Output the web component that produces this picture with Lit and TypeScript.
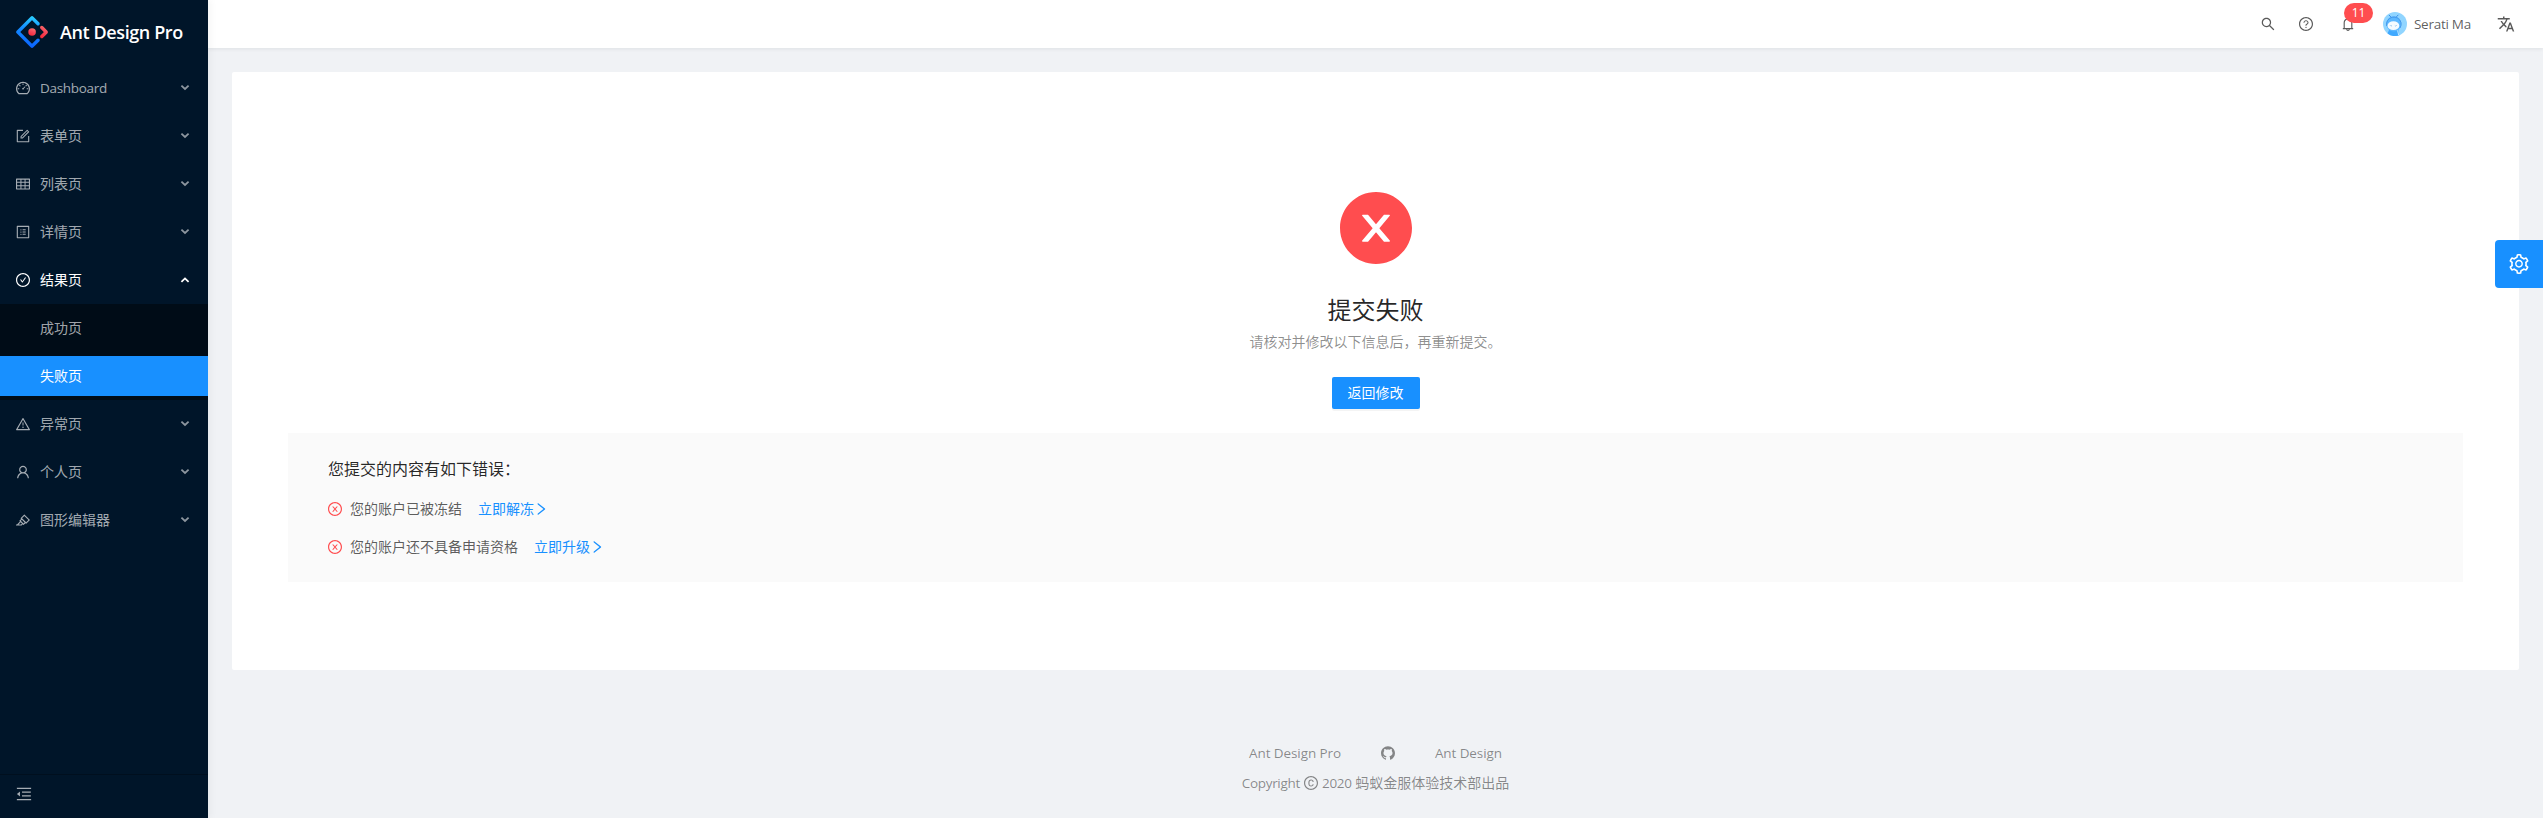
import { LitElement, html, css, svg } from "lit";
import { customElement } from "lit/decorators.js";

const RING =
  "M512 64C264.6 64 64 264.6 64 512s200.6 448 448 448 448-200.6 448-448S759.4 64 512 64zm0 820c-205.4 0-372-166.6-372-372s166.6-372 372-372 372 166.6 372 372-166.6 372-372 372z";

const ICONS: Record<string, string> = {
  search:
    "M909.6 854.5L649.9 594.8C690.2 542.7 712 479 712 412c0-80.2-31.3-155.4-87.9-212.1-56.6-56.7-132-87.9-212.1-87.9s-155.5 31.3-212.1 87.9C143.2 256.5 112 331.8 112 412c0 80.1 31.3 155.5 87.9 212.1C256.5 680.8 331.8 712 412 712c67 0 130.6-21.8 182.7-62l259.7 259.6a8.2 8.2 0 0 0 11.6 0l43.6-43.5a8.2 8.2 0 0 0 0-11.6zM570.4 570.4C528 612.7 471.8 636 412 636s-116-23.3-158.4-65.6C211.3 528 188 471.8 188 412s23.3-116.1 65.6-158.4C296 211.3 352.2 188 412 188s116.1 23.2 158.4 65.6S636 352.2 636 412s-23.3 116.1-65.6 158.4z",
  question:
    RING +
    "M623.6 316.7C593.6 290.4 554 276 512 276s-81.6 14.5-111.6 40.7C369.2 344 352 380.7 352 420v7.6c0 4.4 3.6 8 8 8h48c4.4 0 8-3.6 8-8V420c0-44.1 43.1-80 96-80s96 35.9 96 80c0 31.1-22 59.6-56.1 72.7-21.2 8.1-39.2 22.3-52.1 40.9-13.1 19-19.9 41.8-19.9 64.9V620c0 4.4 3.6 8 8 8h48c4.4 0 8-3.6 8-8v-22.7a48.3 48.3 0 0 1 30.9-44.8c59-22.7 97.1-74.7 97.1-132.5.1-39.3-17.1-76-48.3-103.3zM472 732a40 40 0 1 0 80 0 40 40 0 1 0-80 0z",
  bell: "M816 768h-24V428c0-141.1-104.3-257.7-240-277.1V112c0-22.1-17.9-40-40-40s-40 17.9-40 40v38.9c-135.7 19.4-240 136-240 277.1v340h-24c-17.7 0-32 14.3-32 32v32c0 4.4 3.6 8 8 8h216c0 61.8 50.2 112 112 112s112-50.2 112-112h216c4.4 0 8-3.6 8-8v-32c0-17.7-14.3-32-32-32zM512 888c-26.5 0-48-21.5-48-48h96c0 26.5-21.5 48-48 48zM304 768V428c0-55.6 21.6-107.8 60.9-147.1S456.4 220 512 220c55.6 0 107.8 21.6 147.1 60.9S720 372.4 720 428v340H304z",
  dashboard:
    "M924.8 385.6a446.7 446.7 0 0 0-96-142.4 446.7 446.7 0 0 0-142.4-96C631.1 123.8 572.5 112 512 112s-119.1 11.8-174.4 35.2a446.7 446.7 0 0 0-142.4 96 446.7 446.7 0 0 0-96 142.4C75.8 440.9 64 499.5 64 560c0 132.7 58.3 257.7 159.9 343.1l1.7 1.4c5.8 4.8 13.1 7.5 20.6 7.5h531.7c7.5 0 14.8-2.7 20.6-7.5l1.7-1.4C901.7 817.7 960 692.7 960 560c0-60.5-11.9-119.1-35.2-174.4zM761.4 836H262.6A371.12 371.12 0 0 1 140 560c0-99.4 38.7-192.8 109-263 70.3-70.3 163.7-109 263-109 99.4 0 192.8 38.7 263 109 70.3 70.3 109 163.7 109 263 0 105.6-44.5 205.5-122.6 276zM623.5 421.5a8.03 8.03 0 0 0-11.3 0L527.7 506c-18.7-5-39.4-.2-54.1 14.5a55.95 55.95 0 0 0 0 79.2 55.95 55.95 0 0 0 79.2 0 55.87 55.87 0 0 0 14.5-54.1l84.5-84.5c3.1-3.1 3.1-8.2 0-11.3l-28.3-28.3zM490 320h44c4.4 0 8-3.6 8-8v-80c0-4.4-3.6-8-8-8h-44c-4.4 0-8 3.6-8 8v80c0 4.4 3.6 8 8 8zm260 218v44c0 4.4 3.6 8 8 8h80c4.4 0 8-3.6 8-8v-44c0-4.4-3.6-8-8-8h-80c-4.4 0-8 3.6-8 8zm12.7-197.2l-31.1-31.1a8.03 8.03 0 0 0-11.3 0l-56.6 56.6a8.03 8.03 0 0 0 0 11.3l31.1 31.1c3.1 3.1 8.2 3.1 11.3 0l56.6-56.6c3.1-3.1 3.1-8.2 0-11.3zm-458.6-31.1a8.03 8.03 0 0 0-11.3 0l-31.1 31.1a8.03 8.03 0 0 0 0 11.3l56.6 56.6c3.1 3.1 8.2 3.1 11.3 0l31.1-31.1c3.1-3.1 3.1-8.2 0-11.3l-56.6-56.6zM262 530h-80c-4.4 0-8 3.6-8 8v44c0 4.4 3.6 8 8 8h80c4.4 0 8-3.6 8-8v-44c0-4.4-3.6-8-8-8z",
  form: "M904 512h-56c-4.4 0-8 3.6-8 8v320H184V184h320c4.4 0 8-3.6 8-8v-56c0-4.4-3.6-8-8-8H144c-17.7 0-32 14.3-32 32v736c0 17.7 14.3 32 32 32h736c17.7 0 32-14.3 32-32V520c0-4.4-3.6-8-8-8zM355.9 534.9L354 653.8c-.1 8.9 7.1 16.2 16 16.2h.4l118-2.9c2-.1 4-.9 5.4-2.3l415.9-415c3.1-3.1 3.1-8.2 0-11.3L785.4 114.3c-1.6-1.6-3.6-2.3-5.7-2.3s-4.1.8-5.7 2.3l-415.8 415a8.3 8.3 0 0 0-2.3 5.6zm63.5 23.6L779.7 199l45.2 45.1-360.5 359.7-45.7 1.1.7-46.4z",
  table:
    "M928 160H96c-17.7 0-32 14.3-32 32v640c0 17.7 14.3 32 32 32h832c17.7 0 32-14.3 32-32V192c0-17.7-14.3-32-32-32zm-40 208H676V232h212v136zm0 224H676V432h212v160zM412 432h200v160H412V432zm200-64H412V232h200v136zm-476 64h212v160H136V432zm0-200h212v136H136V232zm0 424h212v136H136V656zm276 0h200v136H412V656zm476 136H676V656h212v136z",
  profile:
    "M880 112H144c-17.7 0-32 14.3-32 32v736c0 17.7 14.3 32 32 32h736c17.7 0 32-14.3 32-32V144c0-17.7-14.3-32-32-32zm-40 728H184V184h656v656zM492 400h184c4.4 0 8-3.6 8-8v-48c0-4.4-3.6-8-8-8H492c-4.4 0-8 3.6-8 8v48c0 4.4 3.6 8 8 8zm0 144h184c4.4 0 8-3.6 8-8v-48c0-4.4-3.6-8-8-8H492c-4.4 0-8 3.6-8 8v48c0 4.4 3.6 8 8 8zm0 144h184c4.4 0 8-3.6 8-8v-48c0-4.4-3.6-8-8-8H492c-4.4 0-8 3.6-8 8v48c0 4.4 3.6 8 8 8zM340 368a40 40 0 1 0 80 0 40 40 0 1 0-80 0zm0 144a40 40 0 1 0 80 0 40 40 0 1 0-80 0zm0 144a40 40 0 1 0 80 0 40 40 0 1 0-80 0z",
  check:
    RING +
    "M699 353h-46.9c-10.2 0-19.9 4.9-25.9 13.3L469 584.3l-71.2-98.8c-6-8.3-15.6-13.3-25.9-13.3H325c-6.5 0-10.3 7.4-6.5 12.7l124.6 172.8a31.8 31.8 0 0 0 51.7 0l210.6-292c3.9-5.3.1-12.7-6.4-12.7z",
  warning:
    "M464 720a48 48 0 1 0 96 0 48 48 0 1 0-96 0zm16-304v184c0 4.4 3.6 8 8 8h48c4.4 0 8-3.6 8-8V416c0-4.4-3.6-8-8-8h-48c-4.4 0-8 3.6-8 8zm475.7 440l-416-720c-6.2-10.7-16.9-16-27.7-16s-21.6 5.3-27.7 16l-416 720C56 877.4 71.4 904 96 904h832c24.6 0 40-26.6 27.7-48zm-783.5-27.9L512 239.9l339.8 588.2H172.2z",
  user: "M858.5 763.6a374 374 0 0 0-80.6-119.5 375.63 375.63 0 0 0-119.5-80.6c-.4-.2-.8-.3-1.2-.5C719.5 518 760 444.7 760 362c0-137-111-248-248-248S264 225 264 362c0 82.7 40.5 156 102.8 201.1-.4.2-.8.3-1.2.5-44.8 18.9-85 46-119.5 80.6a375.63 375.63 0 0 0-80.6 119.5A371.7 371.7 0 0 0 136 901.8a8 8 0 0 0 8 8.2h60c4.4 0 7.9-3.5 8-7.8 2-77.2 33-149.5 87.8-204.3 56.7-56.7 132-87.9 212.2-87.9s155.5 31.2 212.2 87.9C779 752.7 810 825 812 902.2c.1 4.4 3.6 7.8 8 7.8h60a8 8 0 0 0 8-8.2c-1-47.8-10.9-94.3-29.5-138.2zM512 534c-45.9 0-89.1-17.9-121.6-50.4S340 407.9 340 362c0-45.9 17.9-89.1 50.4-121.6S466.1 190 512 190s89.1 17.9 121.6 50.4S684 316.1 684 362c0 45.9-17.9 89.1-50.4 121.6S557.9 534 512 534z",
  highlight:
    "M957.6 507.4L603.2 158.2a7.9 7.9 0 0 0-11.2 0L353.3 393.4a8.03 8.03 0 0 0-.1 11.3l.1.1 40 39.4-117.2 115.3a8.03 8.03 0 0 0-.1 11.3l.1.1 39.5 38.9-189.1 187H72.1c-4.4 0-8.1 3.6-8.1 8V860c0 4.4 3.6 8 8 8h344.9c2.1 0 4.1-.8 5.6-2.3l76.1-75.6 40.4 39.8a7.9 7.9 0 0 0 11.2 0l117.1-115.6 40.1 39.5a7.9 7.9 0 0 0 11.2 0l238.7-235.2c3.4-3 3.4-8 .3-11.2zM389.8 796.2H229.6l134.4-133 80.1 78.9-54.3 54.1zm154.8-62.1L373.2 565.2l68.6-67.6 171.4 168.9-68.6 67.6zM713.1 658L450.3 399.1 597.6 254l262.8 259-147.3 145z",
  fold: "M408 442h480c4.4 0 8-3.6 8-8v-56c0-4.4-3.6-8-8-8H408c-4.4 0-8 3.6-8 8v56c0 4.4 3.6 8 8 8zm-8 204c0 4.4 3.6 8 8 8h480c4.4 0 8-3.6 8-8v-56c0-4.4-3.6-8-8-8H408c-4.4 0-8 3.6-8 8v56zm504-486H120c-4.4 0-8 3.6-8 8v56c0 4.4 3.6 8 8 8h784c4.4 0 8-3.6 8-8v-56c0-4.4-3.6-8-8-8zm0 632H120c-4.4 0-8 3.6-8 8v56c0 4.4 3.6 8 8 8h784c4.4 0 8-3.6 8-8v-56c0-4.4-3.6-8-8-8zM115.4 518.9L271.7 642c5.8 4.6 14.4.5 14.4-6.9V388.9c0-7.4-8.5-11.5-14.4-6.9L115.4 505.1a8.74 8.74 0 0 0 0 13.8z",
  closeFilled:
    "M512 64C264.6 64 64 264.6 64 512s200.6 448 448 448 448-200.6 448-448S759.4 64 512 64zm165.4 618.2l-66-.3L512 563.4l-99.3 118.4-66.1.3c-4.4 0-8-3.5-8-8 0-1.9.7-3.7 1.9-5.2l130.1-155L340.5 359a8.32 8.32 0 0 1-1.9-5.2c0-4.4 3.6-8 8-8l66.1.3L512 464.6l99.3-118.4 66-.3c4.4 0 8 3.5 8 8 0 1.9-.7 3.7-1.9 5.2L553.5 514l130 155c1.2 1.5 1.9 3.3 1.9 5.2 0 4.4-3.6 8-8 8z",
  close:
    RING +
    "M685.4 354.8c0-4.4-3.6-8-8-8l-66 .3L512 465.6l-99.3-118.4-66.1-.3c-4.4 0-8 3.5-8 8 0 1.9.7 3.7 1.9 5.2l130.1 155L340.5 670a8.32 8.32 0 0 0-1.9 5.2c0 4.4 3.6 8 8 8l66.1-.3L512 564.4l99.3 118.4 66 .3c4.4 0 8-3.5 8-8 0-1.9-.7-3.7-1.9-5.2L553.5 515l130.1-155c1.2-1.4 1.8-3.3 1.8-5.2z",
  right:
    "M765.7 486.8L314.9 134.7A7.97 7.97 0 0 0 302 141v77.3c0 4.9 2.3 9.6 6.1 12.6l360 281.1-360 281.1c-3.9 3-6.1 7.7-6.1 12.6V883c0 6.7 7.7 10.4 12.9 6.3l450.8-352.1a31.96 31.96 0 0 0 0-50.4z",
  github:
    "M511.6 76.3C264.3 76.2 64 276.4 64 523.5 64 718.9 189.3 885 363.8 946c23.5 5.9 19.9-10.8 19.9-22.2v-77.5c-135.7 15.9-141.2-73.9-150.3-88.9C215 726 171.5 718 184.5 703c30.9-15.9 62.4 4 98.9 57.9 26.4 39.1 77.9 32.5 104 26 5.7-23.5 17.9-44.5 34.7-60.8-140.6-25.2-199.2-111-199.2-213 0-49.5 16.3-95 48.3-131.7-20.4-60.5 1.9-112.3 4.9-120 58.1-5.2 118.5 41.6 123.2 45.3 33-8.9 70.7-13.6 112.9-13.6 42.4 0 80.2 4.9 113.5 13.9 11.3-8.6 67.3-48.8 121.3-43.9 2.9 7.7 24.7 58.3 5.5 118 32.4 36.8 48.9 82.7 48.9 132.3 0 102.2-59 188.1-200 212.9a127.5 127.5 0 0 1 38.1 91v112.5c.8 9 0 17.9 15 17.9 177.1-59.7 304.6-227 304.6-424.1 0-247.2-200.4-447.3-447.5-447.3z",
  copyright:
    RING +
    "M517.6 351.3c53 0 89 33.8 93 83.4.3 4.2 3.8 7.4 8 7.4h56.7c2.6 0 4.7-2.1 4.7-4.7 0-86.7-68.4-147.4-162.7-147.4C407.4 290 344 364.2 344 486.8v52.3C344 660.8 407.4 734 517.3 734c94 0 162.7-58.8 162.7-141.4 0-2.6-2.1-4.7-4.7-4.7h-56.8c-4.2 0-7.6 3.2-8 7.3-4.2 46.1-40.1 77.8-93 77.8-65.3 0-102.1-47.9-102.1-133.6v-52.6c.1-87 37-135.5 102.2-135.5z",
  setting:
    "M924.8 625.7l-65.5-56c3.1-19 4.7-38.4 4.7-57.8s-1.6-38.8-4.7-57.8l65.5-56a32.03 32.03 0 0 0 9.3-35.2l-.9-2.6a443.74 443.74 0 0 0-79.7-137.9l-1.8-2.1a32.12 32.12 0 0 0-35.1-9.5l-81.3 28.9c-30-24.6-63.5-44-99.7-57.6l-15.7-85a32.05 32.05 0 0 0-25.8-25.7l-2.7-.5c-52.1-9.4-106.9-9.4-159 0l-2.7.5a32.05 32.05 0 0 0-25.8 25.7l-15.8 85.4a351.86 351.86 0 0 0-99 57.4l-81.9-29.1a32 32 0 0 0-35.1 9.5l-1.8 2.1a446.02 446.02 0 0 0-79.7 137.9l-.9 2.6c-4.5 12.5-.8 26.5 9.3 35.2l66.3 56.6c-3.1 18.8-4.6 38-4.6 57.1 0 19.2 1.5 38.4 4.6 57.1L99 625.5a32.03 32.03 0 0 0-9.3 35.2l.9 2.6c18.1 50.4 44.9 96.9 79.7 137.9l1.8 2.1a32.12 32.12 0 0 0 35.1 9.5l81.9-29.1c29.8 24.5 63.1 43.9 99 57.4l15.8 85.4a32.05 32.05 0 0 0 25.8 25.7l2.7.5a449.4 449.4 0 0 0 159 0l2.7-.5a32.05 32.05 0 0 0 25.8-25.7l15.7-85a350 350 0 0 0 99.7-57.6l81.3 28.9a32 32 0 0 0 35.1-9.5l1.8-2.1c34.8-41.1 61.6-87.5 79.7-137.9l.9-2.6c4.5-12.3.8-26.3-9.3-35zM788.3 465.9c2.5 15.1 3.8 30.6 3.8 46.1s-1.3 31-3.8 46.1l-6.6 40.1 74.7 63.9a370.03 370.03 0 0 1-42.6 73.6L721 702.8l-31.4 25.8c-23.9 19.6-50.5 35-79.3 45.8l-38.1 14.3-17.9 97a377.5 377.5 0 0 1-85 0l-17.9-97.2-37.8-14.5c-28.5-10.8-55-26.2-78.7-45.7l-31.4-25.9-93.4 33.2c-17-22.9-31.2-47.6-42.6-73.6l75.5-64.5-6.5-40c-2.4-14.9-3.7-30.3-3.7-45.5 0-15.3 1.2-30.6 3.7-45.5l6.5-40-75.5-64.5c11.3-26.1 25.6-50.7 42.6-73.6l93.4 33.2 31.4-25.9c23.7-19.5 50.2-34.9 78.7-45.7l37.9-14.3 17.9-97.2c28.1-3.2 56.8-3.2 85 0l17.9 97 38.1 14.3c28.7 10.8 55.4 26.2 79.3 45.8l31.4 25.8 92.8-32.9c17 22.9 31.2 47.6 42.6 73.6L781.8 426l6.5 39.9zM512 326c-97.2 0-176 78.8-176 176s78.8 176 176 176 176-78.8 176-176-78.8-176-176-176zm79.2 255.2A111.6 111.6 0 0 1 512 614c-29.9 0-58-11.7-79.2-32.8A111.6 111.6 0 0 1 400 502c0-29.9 11.7-58 32.8-79.2C454 401.6 482.1 390 512 390c29.9 0 58 11.6 79.2 32.8A111.6 111.6 0 0 1 624 502c0 29.9-11.7 58-32.8 79.2z",
};

const icon = (name: string, size = 14) => html`<svg
  class="icon"
  width=${size}
  height=${size}
  viewBox="64 64 896 896"
  fill="currentColor"
>
  ${svg`<path d=${ICONS[name]} />`}
</svg>`;

const arrow = (up = false) => html`<svg class="arrow" width="10" height="8" viewBox="0 0 10 8">
  <path
    d=${up ? "M1.4 5.8L5 2.4L8.6 5.8" : "M1.4 1.6L5 5L8.6 1.6"}
    fill="none"
    stroke="currentColor"
    stroke-width="1.8"
  />
</svg>`;

interface MenuEntry {
  icon: string;
  label: string;
  latin?: boolean;
  children?: { label: string; selected?: boolean }[];
}

const MENU: MenuEntry[] = [
  { icon: "dashboard", label: "Dashboard", latin: true },
  { icon: "form", label: "表单页" },
  { icon: "table", label: "列表页" },
  { icon: "profile", label: "详情页" },
  {
    icon: "check",
    label: "结果页",
    children: [{ label: "成功页" }, { label: "失败页", selected: true }],
  },
  { icon: "warning", label: "异常页" },
  { icon: "user", label: "个人页" },
  { icon: "highlight", label: "图形编辑器" },
];

const ERRORS = [
  { text: "您的账户已被冻结", action: "立即解冻" },
  { text: "您的账户还不具备申请资格", action: "立即升级" },
];

@customElement("app-root")
export class AppRoot extends LitElement {
  static styles = css`
    :host {
      display: flex;
      position: relative;
      height: 818px;
      overflow: hidden;
      background: #f0f2f5;
      font-family: "Open Sans", "Noto Sans CJK SC", sans-serif;
      font-size: 14px;
      line-height: 22px;
      color: rgba(0, 0, 0, 0.65);
    }
    * {
      box-sizing: border-box;
    }
    .icon,
    .arrow {
      display: block;
      flex: none;
    }
    .sider {
      display: flex;
      flex-direction: column;
      flex: none;
      width: 208px;
      background: #001529;
      box-shadow: 2px 0 8px 0 rgba(29, 35, 41, 0.05);
      z-index: 1;
      color: rgba(255, 255, 255, 0.65);
    }
    .brand {
      display: flex;
      align-items: center;
      gap: 12px;
      height: 64px;
      padding-left: 16px;
      color: #fff;
      font-size: 18px;
      font-weight: 600;
      white-space: nowrap;
      letter-spacing: -0.4px;
    }
    .menu {
      flex: 1;
    }
    .row {
      display: flex;
      align-items: center;
      gap: 10px;
      height: 48px;
      padding: 0 18px 0 16px;
    }
    .row.open {
      color: #fff;
    }
    .label {
      flex: 1;
    }
    .latin {
      font-size: 13.5px;
      letter-spacing: -0.3px;
    }
    .arrow {
      opacity: 0.85;
    }
    .open .arrow {
      opacity: 1;
    }
    .sub {
      background: #000c17;
      padding: 4px 0;
      display: grid;
      gap: 8px;
    }
    .subitem {
      height: 40px;
      line-height: 40px;
      padding-left: 40px;
    }
    .subitem.selected {
      background: #1890ff;
      color: #fff;
    }
    .collapse {
      height: 44px;
      padding: 11px 16px 0;
      border-top: 1px solid #000f1e;
    }
    .page {
      display: flex;
      flex-direction: column;
      flex: 1;
      min-width: 0;
    }
    .header {
      display: flex;
      align-items: center;
      justify-content: flex-end;
      height: 48px;
      flex: none;
      padding-right: 28px;
      background: #fff;
      box-shadow: 0 1px 4px rgba(0, 21, 41, 0.08);
    }
    .search {
      margin-right: 24px;
    }
    .notice {
      position: relative;
      margin: 0 28px;
    }
    .badge {
      position: absolute;
      left: 3px;
      top: -14px;
      width: 29px;
      height: 20px;
      border-radius: 10px;
      background: #ff4d4f;
      color: #fff;
      font-size: 12px;
      line-height: 20px;
      text-align: center;
    }
    .avatar {
      display: block;
      margin-right: 7px;
    }
    .name {
      width: 58px;
      margin-right: 25px;
      white-space: nowrap;
      font-size: 13.5px;
      letter-spacing: -0.28px;
    }
    .lang {
      display: block;
    }
    .card {
      flex: none;
      height: 598px;
      margin: 24px 24px 0;
      padding: 120px 56px 0;
      background: #fff;
      border-radius: 2px;
      display: flex;
      flex-direction: column;
      align-items: center;
    }
    .failed {
      color: #ff4d4f;
    }
    .title {
      margin-top: 24px;
      font-size: 24px;
      line-height: 43px;
      color: rgba(0, 0, 0, 0.85);
    }
    .subtitle {
      color: rgba(0, 0, 0, 0.45);
    }
    .button {
      margin-top: 24px;
      height: 32px;
      padding: 0 16px;
      border: 0;
      border-radius: 2px;
      background: #1890ff;
      color: #fff;
      font: inherit;
      box-shadow: 0 2px 0 rgba(0, 0, 0, 0.045);
    }
    .errors {
      align-self: stretch;
      display: grid;
      gap: 16px;
      margin-top: 24px;
      padding: 24px 40px;
      background: #fafafa;
    }
    .errors-title {
      font-size: 16px;
      line-height: 25px;
      color: rgba(0, 0, 0, 0.85);
    }
    .error {
      display: flex;
      align-items: center;
    }
    .error .failed {
      margin-right: 8px;
    }
    .link {
      display: flex;
      align-items: center;
      margin-left: 16px;
      color: #1890ff;
    }
    .footer {
      display: flex;
      flex-direction: column;
      align-items: center;
      gap: 8px;
      margin-top: 72px;
      color: rgba(0, 0, 0, 0.45);
    }
    .links {
      display: flex;
      align-items: center;
      gap: 40px;
      font-size: 13.5px;
      letter-spacing: -0.1px;
    }
    .copy {
      display: flex;
      align-items: center;
      gap: 4px;
    }
    .settings {
      position: absolute;
      right: 0;
      top: 240px;
      display: flex;
      align-items: center;
      justify-content: center;
      width: 48px;
      height: 48px;
      border-radius: 4px 0 0 4px;
      background: #1890ff;
      color: #fff;
      z-index: 2;
    }
  `;

  private renderLogo() {
    return html`<svg width="32" height="32" viewBox="0 0 200 200">
      <defs>
        <linearGradient id="g2" x1="50%" y1="0%" x2="40%" y2="100%">
          <stop offset="0" stop-color="#29cdff" />
          <stop offset="0.38" stop-color="#148eff" />
          <stop offset="1" stop-color="#0a60ff" />
        </linearGradient>
        <linearGradient id="g3" x1="69.7%" y1="-13%" x2="16.7%" y2="117.4%">
          <stop offset="0" stop-color="#fa816e" />
          <stop offset="0.41" stop-color="#f74a5c" />
          <stop offset="1" stop-color="#f51d2c" />
        </linearGradient>
      </defs>
      <path
        fill="url(#g2)"
        d="M91.588 4.177L4.18 91.513c-4.7 4.695-4.7 12.279 0 16.974l87.408 87.336c4.7 4.696 12.289 4.696 16.989 0l36.648-36.618c4.209-4.205 4.209-11.023 0-15.228-4.208-4.205-11.031-4.205-15.24 0l-27.783 27.76c-1.17 1.169-2.945 1.169-4.114 0L28.286 101.993c-1.17-1.169-1.17-2.942 0-4.111l69.802-69.744c1.169-1.169 2.944-1.169 4.114 0l27.783 27.76c4.209 4.205 11.032 4.205 15.24 0 4.209-4.205 4.209-11.022 0-15.227L108.58 4.056c-4.718-4.594-12.311-4.557-16.992.12z"
      />
      <path
        fill="url(#g3)"
        d="M153.686 135.855c4.208 4.205 11.031 4.205 15.24 0l27.034-27.012c4.7-4.696 4.7-12.28 0-16.974l-27.27-27.151c-4.218-4.2-11.043-4.194-15.254.014-4.209 4.205-4.209 11.022 0 15.227l18.418 18.403c1.17 1.17 1.17 2.943 0 4.112l-18.168 18.153c-4.21 4.205-4.21 11.023 0 15.228z"
      />
      <ellipse fill="url(#g3)" cx="100.5" cy="100.4" rx="23.6" ry="23.6" />
    </svg>`;
  }

  private renderAvatar() {
    return html`<svg class="avatar" width="24" height="24" viewBox="0 0 24 24">
      <circle cx="12" cy="12" r="12" fill="#91d5ff" />
      <path d="M4.5 21.4l1.5-3.4h9.5l.8 5.2a12 12 0 0 1-11.8-1.8z" fill="#40a9ff" />
      <path d="M14.5 18l1.2 5.2" stroke="#e6f7ff" stroke-width="0.8" />
      <path d="M8.4 5.5L6 3M13 5.2L15.4 2.8" stroke="#3a8fe8" stroke-width="1" />
      <circle cx="10.8" cy="11.8" r="7.6" fill="#5db8ff" />
      <path
        d="M3.6 14a7.4 7.4 0 0 1 14.4-3.4a7.4 7.4 0 0 1-1 5.4"
        fill="none"
        stroke="#3d8fe6"
        stroke-width="0.8"
      />
      <ellipse cx="10.4" cy="13.7" rx="5.9" ry="4.4" fill="#f5fbff" />
      <path
        d="M7 13.2l1 1 1-.8M11.8 13.4l1 .8 1-1"
        fill="none"
        stroke="#7fb7e8"
        stroke-width="0.7"
      />
    </svg>`;
  }

  private renderMenuEntry(entry: MenuEntry) {
    const open = !!entry.children;
    return html`
      <div class="row ${open ? "open" : ""}">
        ${icon(entry.icon)}
        <span class="label ${entry.latin ? "latin" : ""}">${entry.label}</span>
        ${arrow(open)}
      </div>
      ${entry.children
        ? html`<div class="sub">
            ${entry.children.map(
              (c) => html`<div class="subitem ${c.selected ? "selected" : ""}">${c.label}</div>`
            )}
          </div>`
        : ""}
    `;
  }

  render() {
    return html`
      <aside class="sider">
        <div class="brand">${this.renderLogo()}<span>Ant Design Pro</span></div>
        <nav class="menu">${MENU.map((entry) => this.renderMenuEntry(entry))}</nav>
        <div class="collapse">${icon("fold", 16)}</div>
      </aside>
      <div class="page">
        <header class="header">
          <span class="search">${icon("search")}</span>
          ${icon("question")}
          <span class="notice">${icon("bell")}<span class="badge">11</span></span>
          ${this.renderAvatar()}
          <span class="name">Serati Ma</span>
          <svg class="lang" width="18" height="18" viewBox="0 0 24 24" fill="currentColor">
            <path
              d="M12.87 15.07l-2.54-2.51.03-.03c1.74-1.94 2.98-4.17 3.71-6.53H17V4h-7V2H8v2H1v1.99h11.17C11.5 7.92 10.44 9.75 9 11.35 8.07 10.32 7.3 9.19 6.69 8h-2c.73 1.63 1.73 3.17 2.98 4.56l-5.09 5.02L4 19l5-5 3.11 3.11.76-2.04zM18.5 10h-2L12 22h2l1.12-3h4.75L21 22h2l-4.5-12zm-2.62 7l1.62-4.33L19.12 17h-3.24z"
            />
          </svg>
        </header>
        <main class="card">
          <span class="failed">${icon("closeFilled", 72)}</span>
          <div class="title">提交失败</div>
          <div class="subtitle">请核对并修改以下信息后，再重新提交。</div>
          <button class="button">返回修改</button>
          <section class="errors">
            <div class="errors-title">您提交的内容有如下错误：</div>
            ${ERRORS.map(
              (e) => html`<div class="error">
                <span class="failed">${icon("close")}</span>
                <span>${e.text}</span>
                <a class="link"><span>${e.action}</span>${icon("right")}</a>
              </div>`
            )}
          </section>
        </main>
        <footer class="footer">
          <div class="links"><span>Ant Design Pro</span>${icon("github")}<span>Ant Design</span></div>
          <div class="copy">
            <span class="latin">Copyright</span>${icon("copyright")}
            <span><span class="latin">2020</span> 蚂蚁金服体验技术部出品</span>
          </div>
        </footer>
      </div>
      <div class="settings">${icon("setting", 20)}</div>
    `;
  }
}
